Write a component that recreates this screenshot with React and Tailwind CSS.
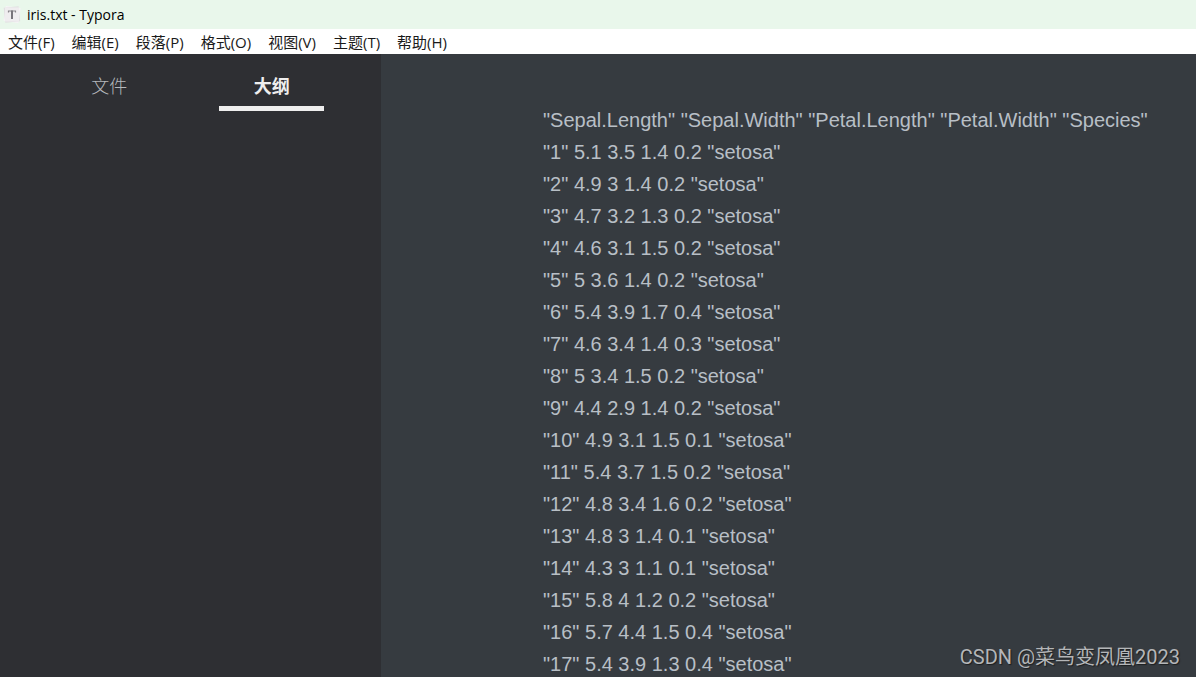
import React, { useState } from 'react';

const menus = ['文件(F)', '编辑(E)', '段落(P)', '格式(O)', '视图(V)', '主题(T)', '帮助(H)'];
const tabs = ['文件', '大纲'];

const lines = [
  '"Sepal.Length" "Sepal.Width" "Petal.Length" "Petal.Width" "Species"',
  '"1" 5.1 3.5 1.4 0.2 "setosa"',
  '"2" 4.9 3 1.4 0.2 "setosa"',
  '"3" 4.7 3.2 1.3 0.2 "setosa"',
  '"4" 4.6 3.1 1.5 0.2 "setosa"',
  '"5" 5 3.6 1.4 0.2 "setosa"',
  '"6" 5.4 3.9 1.7 0.4 "setosa"',
  '"7" 4.6 3.4 1.4 0.3 "setosa"',
  '"8" 5 3.4 1.5 0.2 "setosa"',
  '"9" 4.4 2.9 1.4 0.2 "setosa"',
  '"10" 4.9 3.1 1.5 0.1 "setosa"',
  '"11" 5.4 3.7 1.5 0.2 "setosa"',
  '"12" 4.8 3.4 1.6 0.2 "setosa"',
  '"13" 4.8 3 1.4 0.1 "setosa"',
  '"14" 4.3 3 1.1 0.1 "setosa"',
  '"15" 5.8 4 1.2 0.2 "setosa"',
  '"16" 5.7 4.4 1.5 0.4 "setosa"',
  '"17" 5.4 3.9 1.3 0.4 "setosa"',
];

// stack of paper sheets with the Typora "T" on top
const AppIcon = () => (
  <svg viewBox="0 0 18 18" className="w-[18px] h-[18px]" aria-hidden="true">
    <rect x="1.5" y="1" width="15" height="15" fill="#f6f3f6" transform="rotate(9 9 9)" />
    <rect x="1.5" y="1" width="15" height="15" fill="#e2e0e2" transform="rotate(-6 9 9)" />
    <rect x="2" y="1.5" width="14" height="14" fill="#efedef" />
    <path d="M5.5 6.5V5h7v1.5" fill="none" stroke="#8a878c" strokeWidth="1.2" />
    <path d="M9 4.5v8.5" stroke="#77747a" strokeWidth="2" />
  </svg>
);

const App = () => {
  const [activeTab, setActiveTab] = useState('大纲');

  return (
    <div className="relative flex flex-col h-screen overflow-hidden font-['Open_Sans','Noto_Sans_CJK_SC',sans-serif]">
      {/* Title bar */}
      <header className="flex items-center gap-1 h-[29px] shrink-0 pl-[3px] bg-[#e9f7eb]">
        <AppIcon />
        <h1 className="pl-0.5 text-sm text-black">iris.txt - Typora</h1>
      </header>

      {/* Menu bar */}
      <nav className="flex items-center gap-[17px] h-[25px] shrink-0 px-2 bg-white">
        {menus.map((menu) => (
          <button key={menu} type="button" className="text-[15px] leading-6 text-[#1a1a1a]">
            {menu}
          </button>
        ))}
      </nav>

      <div className="flex flex-1 min-h-0">
        {/* Sidebar */}
        <aside className="w-[381px] shrink-0 px-7 pt-4 bg-[#2e2f33]">
          <div role="tablist" className="flex">
            {tabs.map((tab) => (
              <button
                key={tab}
                type="button"
                role="tab"
                aria-selected={tab === activeTab}
                onClick={() => setActiveTab(tab)}
                className="flex flex-col flex-1 items-center gap-1 text-lg leading-8 font-light text-[#b4b8bc] aria-selected:font-bold aria-selected:text-[#eeeeee]"
              >
                {tab}
                {tab === activeTab && <span className="w-[105px] h-[5px] bg-[#eeeeee]" />}
              </button>
            ))}
          </div>
        </aside>

        {/* Document */}
        <main className="flex-1 min-w-0 overflow-hidden pt-[50px] pl-[162px] bg-[#363b40] font-['Liberation_Sans',Arial,sans-serif] text-xl leading-8 text-[#b8bfc6]">
          {lines.map((line) => (
            <p key={line} className="whitespace-nowrap">
              {line}
            </p>
          ))}
        </main>
      </div>

      {/* Watermark */}
      <div className="absolute right-4 bottom-1 font-['Roboto','Noto_Sans_CJK_SC',sans-serif] text-xl leading-8 text-[#b4b6b8] text-shadow-[1px_1px_1px_#1c1e20]">
        CSDN @菜鸟变凤凰2023
      </div>
    </div>
  );
};

export default App;
